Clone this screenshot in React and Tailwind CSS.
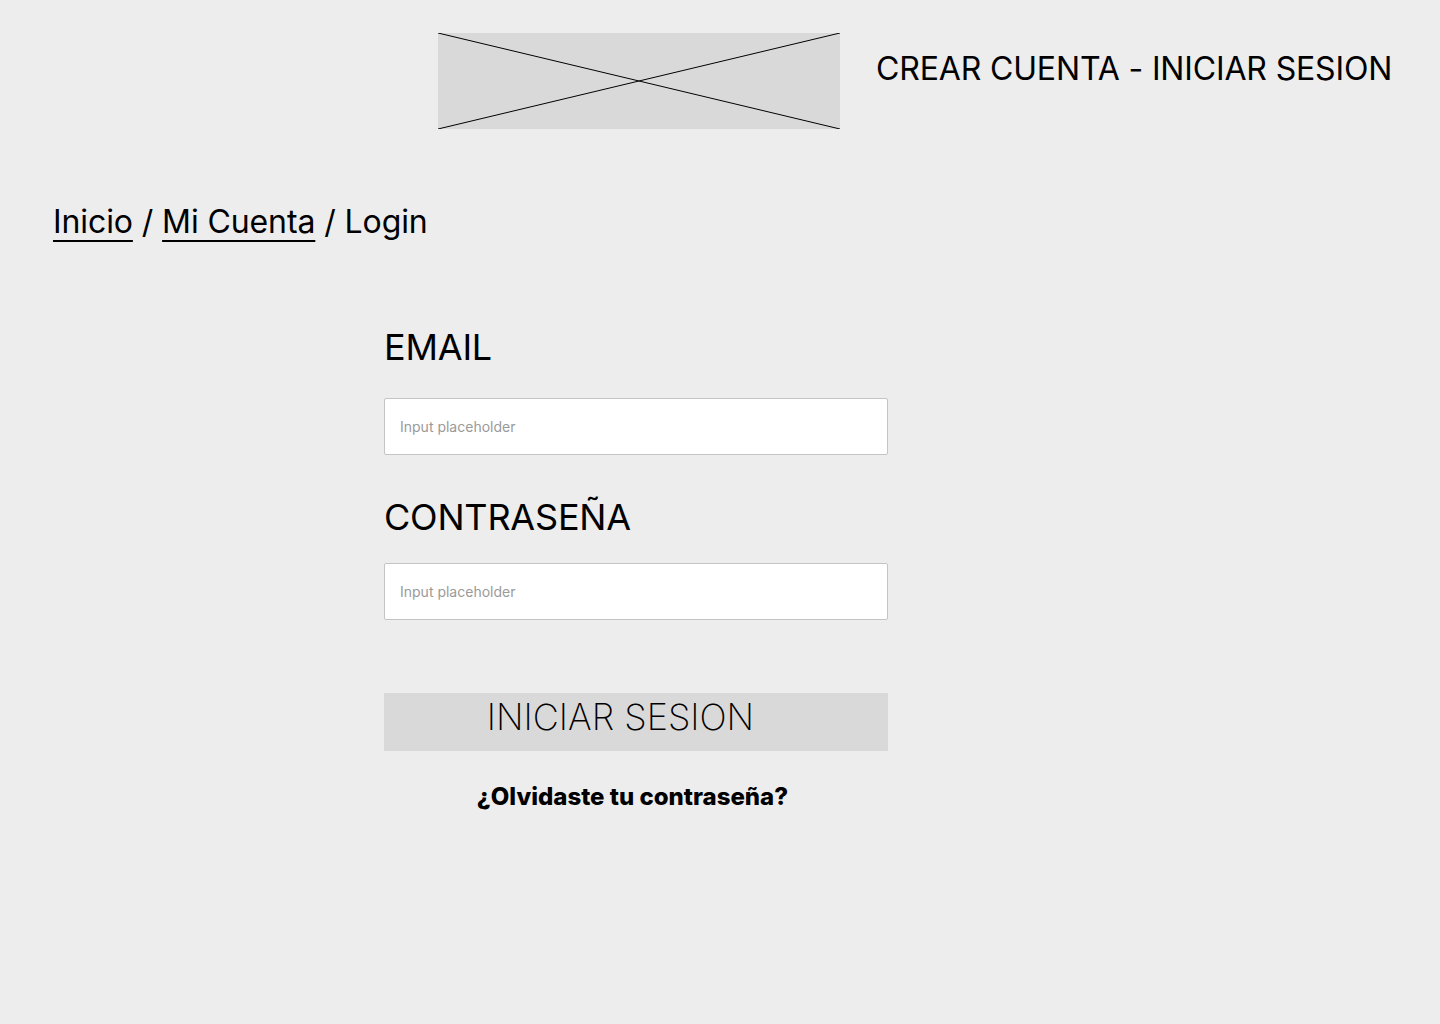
export default function App() {
  return (
    <div className="min-h-[1024px] w-[1440px] bg-[#ededed] text-black" style={{ fontFamily: "Inter, 'Noto Sans', sans-serif" }}>
      <header className="flex items-start pl-[438px] pt-[33px]">
        <div className="w-[402px] h-[96px] bg-[#d9d9d9]">
          <svg width="402" height="96" viewBox="0 0 402 96" className="block">
            <line x1="0" y1="0" x2="402" y2="96" stroke="#000" strokeWidth="1" />
            <line x1="0" y1="96" x2="402" y2="0" stroke="#000" strokeWidth="1" />
          </svg>
        </div>
        <div className="ml-[36px] mt-[20px] text-[32px] leading-none tracking-[-0.15px] whitespace-nowrap">
          CREAR CUENTA - INICIAR SESION
        </div>
      </header>

      <nav className="pl-[53px] mt-[77px] text-[32px] leading-none tracking-[-0.1px] whitespace-nowrap">
        <a className="underline underline-offset-[7px] decoration-[2px]">Inicio</a>
        <span> / </span>
        <a className="underline underline-offset-[7px] decoration-[2px]">Mi Cuenta</a>
        <span> / Login</span>
      </nav>

      <main className="ml-[384px] w-[504px] mt-[91px] flex flex-col">
        <label className="text-[36px] leading-none tracking-[-0.2px]">EMAIL</label>
        <input
          placeholder="Input placeholder"
          className="mt-[33px] h-[57px] w-full bg-white border border-[#c4c4c4] rounded-[2px] px-[15px] text-[14px] placeholder:text-[#9a9a9a] outline-none"
        />
        <label className="mt-[44px] text-[36px] leading-none tracking-[-0.2px]">CONTRASEÑA</label>
        <input
          placeholder="Input placeholder"
          className="mt-[28px] h-[57px] w-full bg-white border border-[#c4c4c4] rounded-[2px] px-[15px] text-[14px] placeholder:text-[#9a9a9a] outline-none"
        />
        <button className="mt-[73px] h-[58px] w-full bg-[#d9d9d9] flex items-start justify-center pt-[6px] pr-[31px]">
          <span className="text-[36px] leading-none font-extralight">INICIAR SESION</span>
        </button>
        <a className="mt-[34px] text-center pr-[7px] text-[24px] leading-none font-extrabold">¿Olvidaste tu contraseña?</a>
      </main>
    </div>
  );
}
